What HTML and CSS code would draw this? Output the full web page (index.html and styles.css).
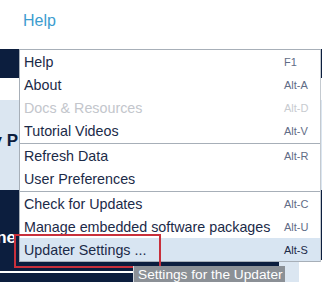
FILE: index.html
```html
<!DOCTYPE html>
<html>
<head>
  <title>Help Menu</title>
  <link rel="stylesheet" href="styles.css">
</head>
<body>
  <div class="page">
    <div class="topbar"><span class="menu-title">Help</span></div>
    <div class="band navy-top"></div>
    <div class="band gap"></div>
    <div class="band light"><span class="peek-dark">y P</span></div>
    <div class="band navy-mid"><span class="peek-light">ne</span></div>
    <div class="bottom-row">
      <div class="navy-bottom"><div class="white-line"></div></div>
      <div class="light-bottom"></div>
    </div>
  </div>

  <div class="dropdown">
    <div class="item"><span class="label">Help</span><span class="key">F1</span></div>
    <div class="item"><span class="label">About</span><span class="key">Alt-A</span></div>
    <div class="item disabled"><span class="label">Docs &amp; Resources</span><span class="key">Alt-D</span></div>
    <div class="item"><span class="label">Tutorial Videos</span><span class="key">Alt-V</span></div>
    <div class="sep"></div>
    <div class="item"><span class="label">Refresh Data</span><span class="key">Alt-R</span></div>
    <div class="item"><span class="label">User Preferences</span><span class="key"></span></div>
    <div class="sep"></div>
    <div class="item"><span class="label">Check for Updates</span><span class="key">Alt-C</span></div>
    <div class="item"><span class="label">Manage embedded software packages</span><span class="key">Alt-U</span></div>
    <div class="item active"><span class="label">Updater Settings ...</span><span class="key">Alt-S</span></div>
  </div>

  <div class="highlight-box"></div>
  <div class="tooltip">Settings for the Updater</div>
</body>
</html>
```

FILE: styles.css
```css
body {
  margin: 0;
  font-family: "Liberation Sans", Arial, sans-serif;
  background-color: #fff;
  overflow: hidden;
}
.page {
  width: 322px;
  height: 282px;
  display: flex;
  flex-direction: column;
}
.topbar {
  height: 49px;
  padding-left: 23px;
  box-sizing: border-box;
  padding-top: 12px;
}
.menu-title {
  font-size: 16px;
  color: #3c9dcf;
}
.band {
  width: 100%;
}
.navy-top {
  height: 29px;
  background-color: #0c1e3e;
}
.gap {
  height: 22px;
}
.light {
  height: 90px;
  background-color: #dbe6f1;
  position: relative;
}
.peek-dark {
  position: absolute;
  right: 304px;
  top: 31px;
  font-size: 17px;
  font-weight: bold;
  color: #0c1e3e;
  white-space: nowrap;
}
.navy-mid {
  height: 70px;
  background-color: #0c1e3e;
  position: relative;
}
.peek-light {
  position: absolute;
  right: 306px;
  top: 38px;
  font-size: 17px;
  font-weight: bold;
  color: #fff;
}
.bottom-row {
  flex: 1;
  display: flex;
}
.navy-bottom {
  width: 279px;
  background-color: #0c1e3e;
  padding-top: 11px;
}
.white-line {
  width: 133px;
  height: 2px;
  background-color: #fff;
}
.light-bottom {
  width: 20px;
  background-color: #dbe6f1;
}
.dropdown {
  position: absolute;
  left: 19px;
  top: 49px;
  width: 302px;
  background-color: #fff;
  border: 1px solid #a7afb8;
  border-right-color: #c4cad0;
  box-sizing: border-box;
}
.item {
  height: 23px;
  display: flex;
  align-items: center;
  justify-content: space-between;
  padding: 0 0 0 4px;
  font-size: 14.3px;
  color: #1b2a48;
}
.label {
  white-space: nowrap;
}
.item.disabled {
  color: #c3c6cc;
}
.item.active {
  background-color: #d8e5f2;
}
.key {
  flex-shrink: 0;
  width: 36px;
  font-size: 11px;
  color: #5f6c86;
  white-space: nowrap;
}
.item.disabled .key {
  color: #c8cbd0;
}
.item.active .key {
  color: #1b2a48;
}
.sep {
  height: 1px;
  margin: 1px 0 0;
  background-color: #a7afb8;
}
.highlight-box {
  position: absolute;
  left: 14px;
  top: 234px;
  width: 147px;
  height: 34px;
  border: 2px solid #c8303c;
  box-sizing: border-box;
}
.tooltip {
  position: absolute;
  left: 133px;
  top: 266px;
  padding: 1px 2px 0 4px;
  height: 18px;
  background-color: #8b9096;
  color: #fff;
  font-size: 13.7px;
  border-left: 1px solid #cfd4da;
}
```
